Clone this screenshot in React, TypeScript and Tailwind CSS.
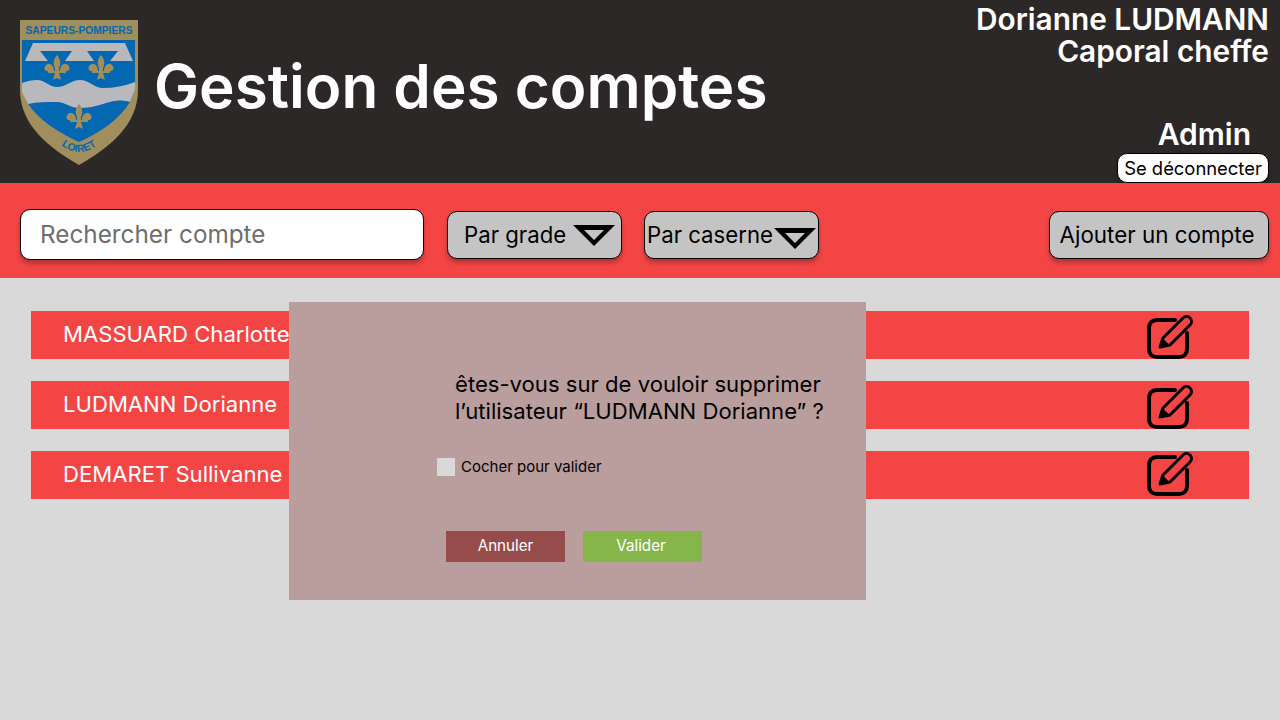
const rows = [
  { name: "MASSUARD Charlotte", iconClass: "ml-[-1px] mt-[1px]" },
  { name: "LUDMANN Dorianne", iconClass: "mt-[1px]" },
  { name: "DEMARET Sullivanne", iconClass: "mt-[-5px]" },
];

function Fleur({ x, y, s = 1 }: { x: number; y: number; s?: number }) {
  return (
    <g transform={`translate(${x} ${y}) scale(${s})`} fill="#a08f5c">
      <path d="M0 -13 C-4 -8 -4 -4 -2 0 L-2 3 L2 3 L2 0 C4 -4 4 -8 0 -13Z" />
      <path d="M-3 3 C-3 -3 -8 -6 -11 -3 C-14 0 -12 4 -9 3 C-10 6 -5 6 -3 3Z" />
      <path d="M3 3 C3 -3 8 -6 11 -3 C14 0 12 4 9 3 C10 6 5 6 3 3Z" />
      <path d="M-6 3 H6 V5 H-6Z" />
      <path d="M-2 5 H2 L4 12 L0 10 L-4 12Z" />
    </g>
  );
}

function Logo() {
  return (
    <svg width="120" height="146" viewBox="0 0 120 146" className="shrink-0">
      <path d="M1 0 H119 V70 C119 105 90 128 60 145 C30 128 1 105 1 70Z" fill="#a08f5c" />
      <path d="M3 20 H116 V70 L111 82 C100 100 80 113 60 122 C40 113 20 100 9 84 L3 70Z" fill="#0467b1" />
      <path d="M14 23 H106 L114 41 H91 L99 31 H68 L75 41 H46 L53 31 H21 L29 41 H6Z" fill="#b9b9bd" />
      <path d="M3 63 C8 61 13 60 18 60 C26 60 30 67 38 67 C47 67 52 60 61 60 C70 60 75 68 84 68 C95 68 105 66 116 62 V70 L111 82 C104 80 98 80 91 82 C80 85 72 88 61 88 C50 88 47 82 38 82 C28 82 18 82 9 84 L3 72Z" fill="#b9b9bd" />
      <Fleur x={38} y={48} />
      <Fleur x={82} y={48} />
      <Fleur x={60} y={97} />
      <text x="60" y="13.5" textAnchor="middle" fontSize="11" fontWeight="700" fill="#0467b1" textLength="107" lengthAdjust="spacingAndGlyphs" fontFamily="'Liberation Sans', sans-serif">
        SAPEURS-POMPIERS
      </text>
      <path id="loiret-arc" d="M38 122 Q60 142 82 122" fill="none" />
      <text fontSize="10.5" fontWeight="700" fill="#0467b1" fontFamily="'Liberation Sans', sans-serif">
        <textPath href="#loiret-arc" startOffset="50%" textAnchor="middle">
          LOIRET
        </textPath>
      </text>
    </svg>
  );
}

function Arrow({ className }: { className: string }) {
  return (
    <svg width="42" height="21" viewBox="0 0 42 21" className={`shrink-0 ${className}`}>
      <path d="M0 0 H42 L21 21Z M11 5 L21 15 L31 5Z" fill="#000" fillRule="evenodd" />
    </svg>
  );
}

function EditIcon({ className }: { className: string }) {
  return (
    <svg width="48" height="48" viewBox="0 0 48 48" fill="none" stroke="#000" strokeLinecap="round" strokeLinejoin="round" className={className}>
      <path d="M29 8 H11 C6 8 3 11 3 16 V37 C3 42 6 45 11 45 H33 C38 45 41 42 41 37 V21" strokeWidth="4" />
      <path d="M14 35 L17 26 L37 6 C39 4 42 4 44 6 C46 8 46 11 44 13 L24 33Z" strokeWidth="3" />
      <path d="M14 35 L17 28 L22 33Z" fill="#000" strokeWidth="2" />
    </svg>
  );
}

export default function App() {
  return (
    <div className="relative flex h-[720px] w-[1280px] flex-col overflow-hidden bg-[#d9d9d9] font-['Inter',sans-serif]">
      <header className="flex h-[183px] items-start justify-between bg-[#2d2828] text-white">
        <div className="flex items-start pl-[19px] pt-[20px]">
          <Logo />
          <h1 className="ml-[15px] mt-[28px] whitespace-nowrap text-[60.2px] font-semibold leading-[77px]">Gestion des comptes</h1>
        </div>
        <div className="flex flex-col items-end pr-[11px] pt-[3px]">
          <p className="whitespace-nowrap text-[29.8px] font-semibold leading-[32px]">Dorianne LUDMANN</p>
          <p className="whitespace-nowrap text-[29.8px] font-semibold leading-[32px]">Caporal cheffe</p>
          <p className="mr-[18px] mt-[51px] text-[30px] font-semibold leading-[32px]">Admin</p>
          <button className="mt-[3px] h-[30px] w-[152px] whitespace-nowrap rounded-[10px] border border-black bg-white text-[18.4px] leading-[24px] text-black shadow-[0_4px_4px_rgba(0,0,0,0.25)]">
            Se déconnecter
          </button>
        </div>
      </header>

      <div className="flex h-[95px] items-center bg-[#f44545] pl-[20px] pr-[11px] pt-[9px]">
        <div className="mt-[-2px] flex h-[51px] w-[404px] items-center rounded-[10px] border border-black bg-white pl-[19px] text-[24.3px] text-[#6e6e6e] shadow-[0_4px_4px_rgba(0,0,0,0.25)]">
          Rechercher compte
        </div>
        <button className="ml-[23px] flex h-[48px] w-[175px] items-center whitespace-nowrap rounded-[10px] border border-black bg-[#c4c4c4] pl-[16px] text-[22.2px] text-black shadow-[0_4px_4px_rgba(0,0,0,0.25)]">
          Par grade
          <Arrow className="ml-[7px]" />
        </button>
        <button className="ml-[22px] flex h-[48px] w-[175px] items-center whitespace-nowrap rounded-[10px] border border-black bg-[#c4c4c4] pl-[2px] text-[22.2px] text-black shadow-[0_4px_4px_rgba(0,0,0,0.25)]">
          Par caserne
          <Arrow className="ml-[1px] mt-[6px]" />
        </button>
        <button className="ml-auto h-[48px] w-[220px] whitespace-nowrap rounded-[10px] border border-black bg-[#c4c4c4] pr-[4px] text-[22.4px] text-black shadow-[0_4px_4px_rgba(0,0,0,0.25)]">
          Ajouter un compte
        </button>
      </div>

      <main className="flex flex-col gap-[22px] px-[31px] pt-[33px]">
        {rows.map((row) => (
          <div key={row.name} className="flex h-[48px] items-center justify-between bg-[#f44545] pl-[32px] pr-[55px]">
            <span className="text-[22.1px] text-white">{row.name}</span>
            <EditIcon className={row.iconClass} />
          </div>
        ))}
      </main>

      <div className="absolute left-[289px] top-[302px] flex h-[298px] w-[577px] flex-col bg-[#ba9d9d]">
        <p className="ml-[166px] mt-[69px] whitespace-nowrap text-[22.1px] leading-[27px] text-black">
          êtes-vous sur de vouloir supprimer
          <br />
          l’utilisateur “LUDMANN Dorianne” ?
        </p>
        <label className="ml-[148px] mt-[31px] flex items-center gap-[6px] text-[15px] leading-[22px] text-black">
          <span className="h-[18px] w-[18px] bg-[#d9d9d9]" />
          Cocher pour valider
        </label>
        <div className="ml-[157px] mt-[53px] flex gap-[18px]">
          <button className="h-[31px] w-[119px] bg-[#974c4c] text-[15.2px] text-white">Annuler</button>
          <button className="h-[31px] w-[119px] bg-[#86b649] pr-[3px] text-[15.2px] text-white">Valider</button>
        </div>
      </div>
    </div>
  );
}
